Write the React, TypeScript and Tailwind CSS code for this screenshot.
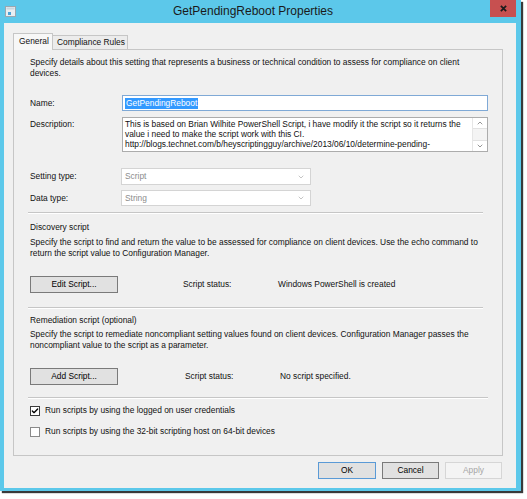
import { Check, ChevronDown, ChevronUp } from 'lucide-react';

const FONT = { fontFamily: '"Liberation Sans", Arial, sans-serif' };

function Separator({ right = 5 }: { right?: number }) {
  return (
    <div
      className={`-ml-[2px] border-t border-[#c6c6c6] border-b border-b-white ${right === 5 ? 'mr-[5px]' : 'mr-0'}`}
    />
  );
}

function Select({ value }: { value: string }) {
  return (
    <div className="w-[190px] h-full bg-white border border-[#d4d4d4] flex items-center pl-[3px] pr-[5px] text-[#8c8c8c]">
      <span className="flex-1">{value}</span>
      <ChevronDown className="w-[8px] h-[8px] text-[#a8a8a8]" strokeWidth={2} />
    </div>
  );
}

function Button({ label, kind = 'normal', className = '' }: { label: string; kind?: 'normal' | 'default' | 'disabled' | 'pressed'; className?: string }) {
  const styles = {
    normal: 'bg-[#e1e1e1] border-[#adadad] text-black',
    default: 'bg-[#e1e1e1] border-[#5a9ad6] text-black',
    pressed: 'bg-[#e1e1e1] border-[#7a7a7a] text-black',
    disabled: 'bg-[#f4f4f4] border-[#d6d6d6] text-[#a6a6a6]',
  }[kind];
  return (
    <div className={`border flex items-center justify-center ${styles} ${className}`}>
      {label}
    </div>
  );
}

export default function App() {
  return (
    <div className="w-[527px] h-[499px] bg-white text-[8.4px] leading-[11px] text-[#111]" style={FONT}>
      <div className="w-[521px] h-[491px] bg-[#5cc8ea] shadow-[2px_2px_1px_#3a3a3a] flex flex-col">
        {/* Title bar */}
        <div className="h-[23px] flex items-start">
          <div className="ml-[5px] mt-[6px] w-[11px] h-[11px]">
            <svg viewBox="0 0 11 11" className="w-[11px] h-[11px]">
              <rect x="0.5" y="0.5" width="10" height="10" fill="#e8eef2" stroke="#9aa7b0" />
              <rect x="1.5" y="1.5" width="8" height="2" fill="#c9d6de" />
              <rect x="3" y="6" width="3" height="3" fill="#4aa3d8" />
            </svg>
          </div>
          <div className="flex-1 text-center text-[12px] leading-[23px] text-[#1a1a1a]">GetPendingReboot Properties</div>
          <div className="mr-[5px] w-[26px] h-[17px] bg-[#c75050] flex items-center justify-center">
            <svg viewBox="0 0 8 8" className="w-[7px] h-[7px]">
              <path d="M1 1 L7 7 M7 1 L1 7" stroke="#1c1c1c" strokeWidth="2" />
            </svg>
          </div>
        </div>

        {/* Client area */}
        <div className="ml-[4px] mr-[5px] mb-[3px] flex-1 bg-[#f0f0f0] pt-[10px] pl-[9px] pr-[13px]">
          {/* Tabs */}
          <div className="flex items-end h-[16px] relative z-10">
            <div className="w-[40px] h-[17px] -mb-[1px] bg-[#f7f7f7] border border-[#c6c6c6] border-b-0 pl-[5px] leading-[15px]">
              General
            </div>
            <div className="w-[75px] h-[14px] bg-[#ececec] border border-[#c6c6c6] border-l-0 border-b-0 pl-[4px] leading-[13px]">
              Compliance Rules
            </div>
          </div>

          {/* Panel */}
          <div className="h-[407px] border border-[#c6c6c6] pl-[16px] pr-[14px] pt-[7px]">
            <div>
              Specify details about this setting that represents a business or technical condition to assess for compliance on client
              <br />
              devices.
            </div>

            <div className="mt-[16px] h-[16px] flex items-center">
              <div className="w-[92px]">Name:</div>
              <div className="flex-1 h-full bg-white border border-[#7fa9d6] flex items-center pl-[2px]">
                <span className="bg-[#3399ff] text-white leading-[11px] px-[1px]">GetPendingReboot</span>
              </div>
            </div>

            <div className="mt-[6px] h-[35px] flex items-start">
              <div className="w-[92px] pt-[2px]">Description:</div>
              <div className="flex-1 h-full bg-white border border-[#acacac] flex">
                <div className="flex-1 pl-[2px] pt-[1px] leading-[10px] whitespace-nowrap overflow-hidden">
                  This is based on Brian Wilhite PowerShell Script, i have modify it the script so it returns the
                  <br />
                  value i need to make the script work with this CI.
                  <br />
                  http://blogs.technet.com/b/heyscriptingguy/archive/2013/06/10/determine-pending-
                </div>
                <div className="w-[15px] flex flex-col border-l border-[#e6e6e6] bg-[#f4f4f4]">
                  <div className="h-[11px] flex items-center justify-center bg-white border-b border-[#e2e2e2]">
                    <ChevronUp className="w-[8px] h-[8px] text-[#606060]" strokeWidth={2} />
                  </div>
                  <div className="flex-1" />
                  <div className="h-[11px] flex items-center justify-center bg-white border-t border-[#e2e2e2]">
                    <ChevronDown className="w-[8px] h-[8px] text-[#606060]" strokeWidth={2} />
                  </div>
                </div>
              </div>
            </div>

            <div className="mt-[16px] h-[17px] flex items-center">
              <div className="w-[91px]">Setting type:</div>
              <Select value="Script" />
            </div>
            <div className="mt-[5px] h-[16px] flex items-center">
              <div className="w-[91px]">Data type:</div>
              <Select value="String" />
            </div>

            <div className="mt-[6px]">
              <Separator />
            </div>

            <div className="mt-[8px]">Discovery script</div>
            <div className="mt-[4px]">
              Specify the script to find and return the value to be assessed for compliance on client devices. Use the echo command to
              <br />
              return the script value to Configuration Manager.
            </div>

            <div className="mt-[17px] h-[17px] flex items-center">
              <Button label="Edit Script..." kind="pressed" className="w-[88px] h-full" />
              <div className="ml-[65px] w-[95px]">Script status:</div>
              <div>Windows PowerShell is created</div>
            </div>

            <div className="mt-[14px]">
              <Separator />
            </div>

            <div className="mt-[6px]">Remediation script (optional)</div>
            <div className="mt-[3px]">
              Specify the script to remediate noncompliant setting values found on client devices. Configuration Manager passes the
              <br />
              noncompliant value to the script as a parameter.
            </div>

            <div className="mt-[17px] h-[17px] flex items-center">
              <Button label="Add Script..." kind="pressed" className="w-[88px] h-full" />
              <div className="ml-[67px] w-[95px]">Script status:</div>
              <div>No script specified.</div>
            </div>

            <div className="mt-[12px]">
              <Separator right={0} />
            </div>

            <div className="mt-[6px] h-[11px] flex items-center">
              <div className="w-[10px] h-[10px] bg-white border border-[#3c3c3c] flex items-center justify-center">
                <Check className="w-[8px] h-[8px] text-black" strokeWidth={4} />
              </div>
              <div className="ml-[5px]">Run scripts by using the logged on user credentials</div>
            </div>
            <div className="mt-[10px] h-[11px] flex items-center">
              <div className="w-[10px] h-[10px] bg-white border border-[#8a8a8a]" />
              <div className="ml-[5px]">Run scripts by using the 32-bit scripting host on 64-bit devices</div>
            </div>
          </div>

          {/* Dialog buttons */}
          <div className="mt-[6px] h-[17px] flex justify-end gap-[6px] pr-[1px]">
            <Button label="OK" kind="default" className="w-[58px] h-full" />
            <Button label="Cancel" kind="pressed" className="w-[57px] h-full" />
            <Button label="Apply" kind="disabled" className="w-[57px] h-full" />
          </div>
        </div>
      </div>
    </div>
  );
}
